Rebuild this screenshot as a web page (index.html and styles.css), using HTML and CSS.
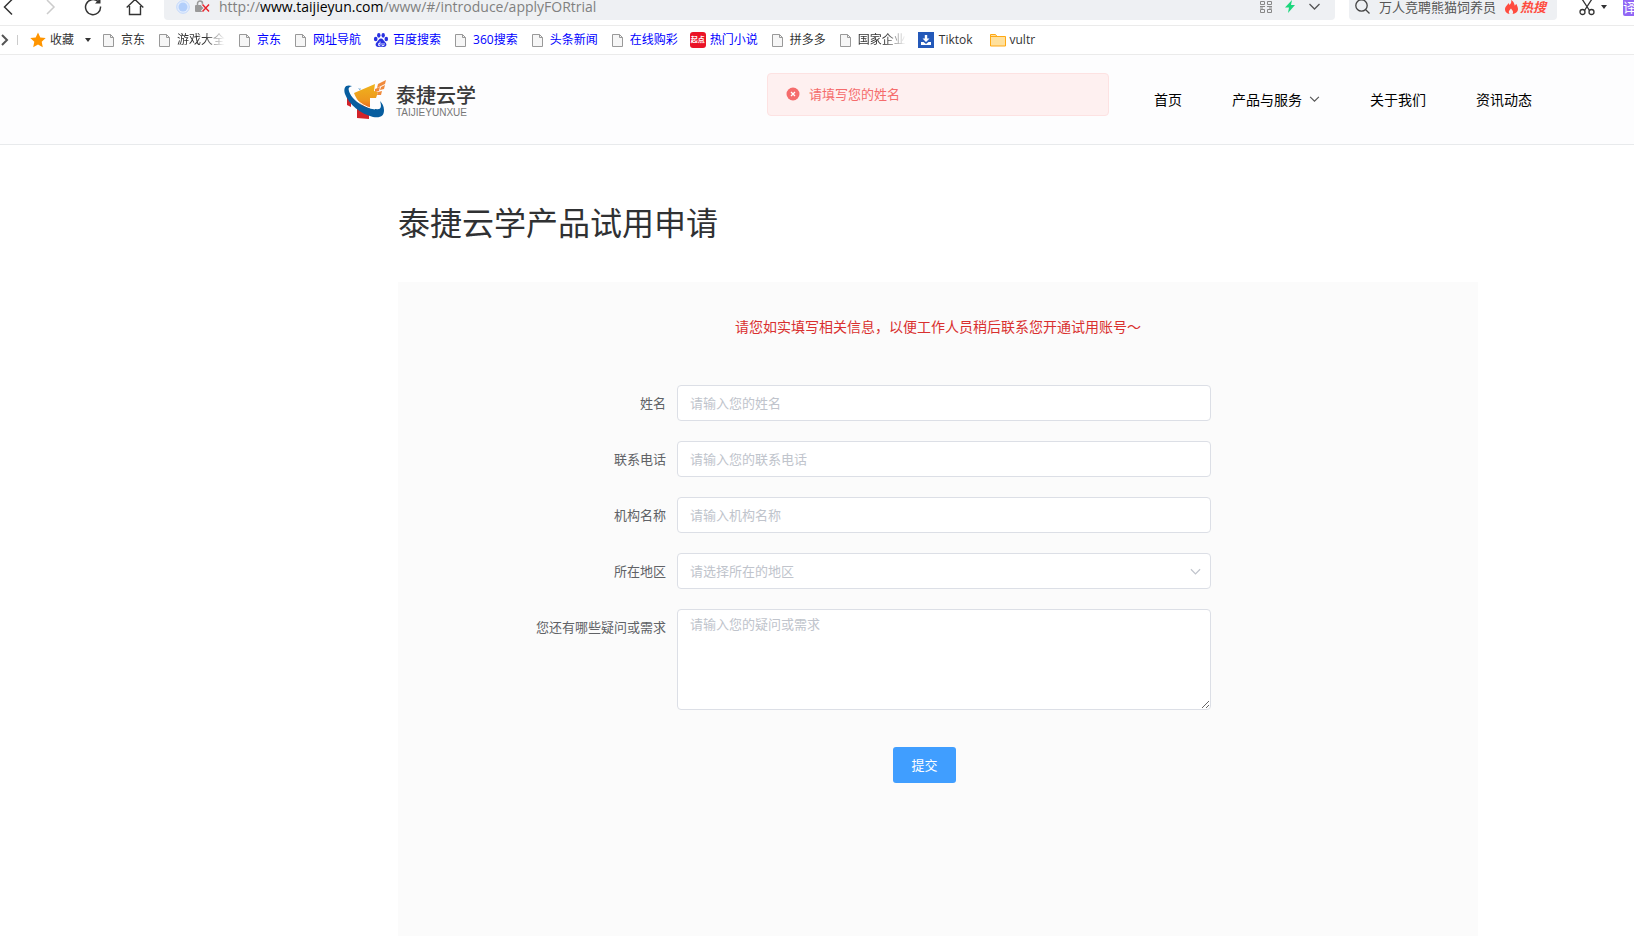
FILE: index.html
```html
<!DOCTYPE html>
<html lang="zh-CN">
<head>
<meta charset="utf-8">
<title>泰捷云学产品试用申请</title>
<link rel="stylesheet" href="styles.css">
</head>
<body>
<svg class="defs" aria-hidden="true">
  <symbol id="page" viewBox="0 0 16 16"><path d="M2.500 2.500h7l3 3v9h-10z" fill="#f6f6f6" stroke="#999"/><path d="M9.500 2.500v3h3" fill="none" stroke="#999"/></symbol>
  <symbol id="down" viewBox="0 0 12 8"><path d="M1 1l5 5 5-5" fill="none" stroke="currentColor" stroke-width="1.3"/></symbol>
  <symbol id="caret" viewBox="0 0 6 4"><path d="M0 0h6L3 4z" fill="currentColor"/></symbol>
</svg>
<div class="toolbar">
  <div class="navbtns">
    <button type="button" aria-label="后退"><svg width="18" height="18" viewBox="0 0 18 18"><path d="M12 1.500L4.500 9l7.500 7.500" fill="none" stroke="#333" stroke-width="1.500"/></svg></button>
    <button type="button" aria-label="前进"><svg width="18" height="18" viewBox="0 0 18 18"><path d="M5 2l7 7-7 7" fill="none" stroke="#ccc" stroke-width="1.500"/></svg></button>
    <button type="button" aria-label="刷新"><svg width="18" height="18" viewBox="0 0 18 18"><path d="M14 3.500A7.500 7.500 0 1 0 16.500 8.500" fill="none" stroke="#333" stroke-width="1.500"/><path d="M16.500 0v5.500H11z" fill="#333"/></svg></button>
    <button type="button" aria-label="主页"><svg width="18" height="18" viewBox="0 0 18 18"><path d="M.7 9.500L9 1.500l8.300 8M3.500 8v8.500h11V8" fill="none" stroke="#333" stroke-width="1.400"/></svg></button>
  </div>
  <div class="address">
    <svg width="14" height="14" viewBox="0 0 14 14"><circle cx="7" cy="7" r="6.300" fill="#e3edfd" stroke="#c3d8fb"/><circle cx="7" cy="7" r="4.500" fill="#b3cffb"/></svg>
    <svg width="15" height="14" viewBox="0 0 15 14"><path d="M2.500 6V3.500a2.500 2.500 0 0 1 5 0V6" fill="none" stroke="#999" stroke-width="1.500"/><rect y="5" width="9" height="7" rx="1" fill="#999"/><path d="M7 4.500l7 7M14 4.500l-7 7" stroke="#eef0f3" stroke-width="3"/><path d="M7.500 4.500l6.500 7M14 4.500l-6.500 7" stroke="#e8232b" stroke-width="1.400"/></svg>
    <div class="url">http://<b>www.taijieyun.com</b>/www/#/introduce/applyFORtrial</div>
    <div class="tools">
      <svg width="12" height="12" viewBox="0 0 12 12" fill="none" stroke="#888"><path d="M.5.500h4v3h-4zM7.500.500h4v3h-4zM.5 8.500h4v3h-4zM7.500 8.500h4v3h-4zM0 5.500h5M7 5.500h5M0 7h3M9 7h3"/></svg>
      <svg width="10" height="13" viewBox="0 0 10 13"><path d="M7 0L0 7.500h4L3 13l7-8H6z" fill="#1bd67c"/></svg>
      <svg class="gray" width="13" height="8"><use href="#down"/></svg>
    </div>
  </div>
  <div class="search">
    <svg width="15" height="15" viewBox="0 0 15 15"><circle cx="6.500" cy="6.500" r="5.700" fill="none" stroke="#444" stroke-width="1.300"/><path d="M10.500 10.500l4 4" stroke="#444" stroke-width="1.300"/></svg>
    <span>万人竞聘熊猫饲养员</span>
    <a class="hot" href="#"><svg width="13" height="14" viewBox="0 0 13 14"><path d="M6 0c1 2-.5 4-1.500 5C4 4 4 3.500 3.500 3 3 5 0 6 0 9.500 0 12 2 13.500 4.500 14 3 12 4 10.500 6 8.500c1.500 2 3 3.500 1.500 5.500 3-.5 5.500-2 5.500-5 0-2-1-3-1.500-5-1 .5-1.500 1-1.500 2C9 3 8.500 1 6 0z" fill="#ff4b3e"/></svg>热搜</a>
  </div>
  <div class="extras">
    <svg width="16" height="18" viewBox="0 0 16 18" fill="none" stroke="#333" stroke-width="1.300"><path d="M3 1l7.500 11.500M13 1L5.500 12.500"/><circle cx="3.500" cy="14" r="2.500"/><circle cx="12.500" cy="14" r="2.500"/></svg>
    <svg width="6" height="4"><use href="#caret"/></svg>
    <span class="translate">译</span>
  </div>
</div>
<nav class="bookmarks" aria-label="收藏栏">
  <svg class="expand" width="8" height="12" viewBox="0 0 8 12"><path d="M1 1l5 5-5 5" fill="none" stroke="#555" stroke-width="2"/></svg>
  <span class="sep"></span>
  <button type="button" class="fav"><svg width="16" height="16" viewBox="0 0 16 16"><path d="M8 .5l2.300 5 5.400.6-4 3.700 1.100 5.500L8 12.600l-4.800 2.700 1.100-5.500-4-3.700 5.400-.6z" fill="#ff9500"/></svg>收藏<svg class="favcaret" width="6" height="4"><use href="#caret"/></svg></button>
  <a class="dark" href="#"><svg><use href="#page"/></svg>京东</a>
  <a class="dark fade" href="#"><svg><use href="#page"/></svg>游戏大全</a>
  <a href="#"><svg><use href="#page"/></svg>京东</a>
  <a href="#"><svg><use href="#page"/></svg>网址导航</a>
  <a href="#"><svg viewBox="0 0 16 16" fill="#2932e1"><ellipse cx="2.700" cy="7" rx="1.800" ry="2.300"/><ellipse cx="5.800" cy="3.300" rx="1.700" ry="2.400"/><ellipse cx="10.200" cy="3.300" rx="1.700" ry="2.400"/><ellipse cx="13.300" cy="7" rx="1.800" ry="2.300"/><path d="M8 6.500c2 0 2.500 2 4 3.500s2 3 .7 4.300C11.500 15.500 10 14.800 8 14.800s-3.500.7-4.700-.5C2 13 2.500 11.500 4 10S6 6.500 8 6.500z"/><path d="M7 9.500v4H5.500V11.500H7M9 11v2.500h2V11" fill="none" stroke="#fff" stroke-width=".8"/></svg>百度搜索</a>
  <a href="#"><svg><use href="#page"/></svg>360搜索</a>
  <a href="#"><svg><use href="#page"/></svg>头条新闻</a>
  <a href="#"><svg><use href="#page"/></svg>在线购彩</a>
  <a href="#"><span class="qidian">起点</span>热门小说</a>
  <a class="dark" href="#"><svg><use href="#page"/></svg>拼多多</a>
  <a class="dark fade" href="#"><svg><use href="#page"/></svg>国家企业</a>
  <a class="dark fade-end" href="#"><svg viewBox="0 0 16 16"><path d="M0 0h16v16H0z" fill="#2459b9"/><path d="M6.800 3h2.400v3.500h2.300L8 10 4.500 6.500h2.300zM3 10h2.500L8 12l2.500-2H13v3H3z" fill="#fff"/></svg>Tiktok</a>
  <a class="dark" href="#"><svg viewBox="0 0 16 16"><path d="M.5 2.500h5l1.500 2h8.500v9.500H.5z" fill="#ffe09c" stroke="#ffa814"/><path d="M1 4.500h6" stroke="#ffa814"/></svg>vultr</a>
</nav>
<header class="site">
  <a class="logo" href="#">
    <svg width="45" height="40" viewBox="0 0 45 40">
      <defs><linearGradient id="g" x1="0" y1="0" x2="0" y2="1"><stop offset="0" stop-color="#efb41c"/><stop offset=".6" stop-color="#ee981e"/><stop offset="1" stop-color="#e5561f"/></linearGradient></defs>
      <path d="M4 17h4v10l-4-2zM14 25h12v14l-12-1z" fill="#d2232a"/>
      <path d="M11 13L32 4l-1 7 4 1-2 6h-6v13C20 27 14 21 11 13z" fill="url(#g)"/>
      <path d="M35 4l8-4-1 4-8 4zM32 9l5-2-1 4-4 1zM38 7l4-2-1 4-4 1zM35 12l4-1-1 4h-4z" fill="#f08a3c"/>
      <path d="M9 6C3 4 0 7 2 14c4 11 16 20 28 23 8 1 11-1 11-7 0-4-2-7-4-9 2 6 1 9-4 8C21 29 8 19 6 11 5 8 6 7 9 6z" fill="#075d9f"/>
      <path d="M7 11c3 8 15 17 25 18" fill="none" stroke="#fff" stroke-width="1"/>
      <path d="M15 8l2 1 1-1-1 2z" fill="#1672b2"/>
    </svg>
    <span class="brand"><strong>泰捷云学</strong><small>TAIJIEYUNXUE</small></span>
  </a>
  <nav class="menu">
    <a href="#">首页</a>
    <a href="#">产品与服务<svg width="11" height="7"><use href="#down"/></svg></a>
    <a href="#">关于我们</a>
    <a href="#">资讯动态</a>
  </nav>
  <div class="message" role="alert">
    <svg width="14" height="14" viewBox="0 0 14 14"><circle cx="7" cy="7" r="6.500" fill="#f56c6c"/><path d="M5 5l4 4M9 5L5 9" stroke="#fff" stroke-width="1.300"/></svg>
    请填写您的姓名
  </div>
</header>
<main>
  <h1>泰捷云学产品试用申请</h1>
  <section class="panel">
    <p class="notice">请您如实填写相关信息，以便工作人员稍后联系您开通试用账号～</p>
    <form>
      <label for="name">姓名</label>
      <input id="name" type="text" placeholder="请输入您的姓名">
      <label for="phone">联系电话</label>
      <input id="phone" type="text" placeholder="请输入您的联系电话">
      <label for="org">机构名称</label>
      <input id="org" type="text" placeholder="请输入机构名称">
      <label for="area">所在地区</label>
      <div class="select"><select id="area"><option>请选择所在的地区</option></select><svg width="11" height="8"><use href="#down"/></svg></div>
      <label for="need">您还有哪些疑问或需求</label>
      <textarea id="need" placeholder="请输入您的疑问或需求"></textarea>
      <div class="actions"><button type="button">提交</button></div>
    </form>
  </section>
</main>
</body>
</html>
```
FILE: styles.css
```css
* { box-sizing: border-box; }
html, body { height: 100%; }
body {
  margin: 0;
  display: flex;
  flex-direction: column;
  overflow: hidden;
  background: #fff;
  color: #303133;
  font-family: "Open Sans", "Noto Sans CJK SC", sans-serif;
  font-size: 13px;
}
a { color: inherit; text-decoration: none; }
button { font: inherit; cursor: pointer; }
svg { flex: none; display: block; }
.defs { position: absolute; width: 0; height: 0; }

/* browser toolbar */
.toolbar {
  flex: none;
  display: flex;
  height: 26px;
  overflow: hidden;
  border-bottom: 1px solid #ebebeb;
  line-height: 14px;
}
.navbtns { display: flex; align-items: center; gap: 24px; width: 164px; height: 14px; }
.navbtns button { padding: 0; border: 0; background: none; }
.address, .search {
  display: flex;
  align-items: center;
  height: 20px;
  padding-bottom: 7px;
  background: #eef0f3;
  border-radius: 0 0 4px 4px;
}
.address { flex: 1; gap: 5px; padding-left: 12px; padding-right: 14px; }
.url { margin-left: 4px; color: #808080; font-size: 14px; white-space: nowrap; }
.url b { color: #000; font-weight: 400; }
.tools { display: flex; align-items: center; gap: 13px; margin-left: auto; }
.gray { color: #555; }
.search { width: 208px; margin-left: 14px; padding-left: 6px; gap: 9px; color: #555; white-space: nowrap; }
.hot { display: flex; gap: 2px; color: #ff4b3e; font-weight: 700; font-style: italic; }
.extras { display: flex; align-items: center; gap: 6px; width: 77px; height: 14px; padding-left: 22px; }
.translate { width: 16px; margin-left: 10px; flex: none; background: #9166f5; color: #fff; line-height: 18px; border-radius: 2px; }

/* bookmarks */
.bookmarks {
  flex: none;
  display: flex;
  align-items: center;
  gap: 12px;
  height: 29px;
  border-bottom: 1px solid #ebebeb;
  font-size: 12px;
  line-height: 18px;
  color: #00f;
  white-space: nowrap;
}
.bookmarks a { display: flex; align-items: center; gap: 4px; }
.bookmarks a svg { width: 16px; height: 16px; }
.bookmarks .dark { color: #333; }
.expand { margin-left: 1px; margin-right: -4px; }
.sep { width: 1px; height: 10px; background: #ccc; }
.fav { display: flex; align-items: center; gap: 4px; padding: 0; border: 0; background: none; color: #333; }
.favcaret { margin: 0 -2px 0 7px; }
.fade { -webkit-mask-image: linear-gradient(90deg, #000 70%, transparent); mask-image: linear-gradient(90deg, #000 70%, transparent); }
.bookmarks .fade-end { margin-right: 5px; gap: 5px; }
.qidian {
  width: 16px;
  height: 16px;
  border-radius: 3px;
  background: #ea1327;
  color: #fff;
  font-size: 7px;
  font-weight: 700;
  line-height: 16px;
  text-align: center;
}

/* site header */
.site {
  flex: none;
  position: relative;
  display: flex;
  align-items: center;
  justify-content: space-between;
  height: 90px;
  padding: 0 102px 0 343px;
  border-bottom: 1px solid #e8eaec;
  background: #fdfdfe;
}
.logo { display: flex; align-items: center; gap: 8px; }
.brand { display: flex; flex-direction: column; padding-top: 4px; color: #3a3a3a; }
.brand strong { font-size: 20px; font-weight: 500; line-height: 22px; }
.brand small { font: 10px/12px "Liberation Sans", sans-serif; color: #777; }
.menu { display: flex; gap: 50px; color: #000; font-size: 14px; line-height: 20px; }
.menu a { display: flex; align-items: center; gap: 7px; }
.menu svg { color: #555; }
.message {
  position: absolute;
  top: 18px;
  left: 767px;
  display: flex;
  align-items: center;
  gap: 9px;
  width: 342px;
  height: 43px;
  padding: 0 18px 2px;
  border: 1px solid #fde2e2;
  border-radius: 4px;
  background: #fef0f0;
  color: #f56c6c;
}

/* trial form */
main { flex: 1; display: flex; flex-direction: column; width: 1478px; padding-left: 398px; }
h1 { margin: 54px 0 35px; font-size: 32px; font-weight: 400; line-height: 48px; }
.panel { flex: 1; padding-top: 35px; background: #fbfbfb; }
.notice { margin: 0; color: #d9302f; font-size: 14px; line-height: 20px; text-align: center; }
form {
  display: grid;
  grid-template-columns: 149px 534px;
  column-gap: 11px;
  row-gap: 20px;
  margin: 48px 0 0 119px;
  line-height: 18px;
}
label { padding-top: 9px; color: #606266; text-align: right; }
input, textarea, select {
  display: block;
  width: 100%;
  height: 36px;
  margin: 0;
  padding: 0 12px;
  border: 1px solid #dcdfe6;
  border-radius: 4px;
  background: #fff;
  font: inherit;
  color: #606266;
}
::placeholder { color: #c0c4cc; opacity: 1; }
select { appearance: none; color: #c0c4cc; }
.select { position: relative; }
.select svg { position: absolute; right: 10px; top: 15px; color: #c0c4cc; pointer-events: none; }
textarea { height: 101px; padding: 5px 12px; resize: vertical; }
.actions { grid-column: 1 / -1; padding: 17px 0 0 121px; text-align: center; }
.actions button {
  width: 63px;
  height: 36px;
  padding: 0;
  border: 0;
  border-radius: 3px;
  background: #409eff;
  color: #fff;
}
```
